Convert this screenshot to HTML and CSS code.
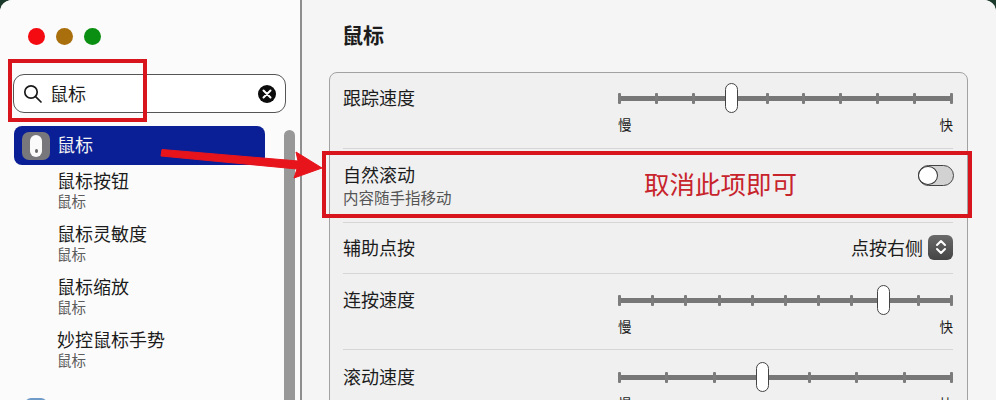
FILE: index.html
```html
<!DOCTYPE html>
<html lang="zh-CN">
  <head>
    <meta charset="UTF-8" />
    <title>鼠标</title>
    <link rel="stylesheet" href="styles.css">
  </head>
  <body>
    <div class="window">
      <div class="sidebar">
        <div class="traffic">
          <span class="light red"></span>
          <span class="light amber"></span>
          <span class="light green"></span>
        </div>

        <div class="search">
          <svg class="search-icon" width="20" height="20" viewBox="0 0 20 20" fill="none" stroke="#1a1a1a" stroke-width="1.7" stroke-linecap="round">
            <circle cx="8" cy="8" r="6.2" />
            <path d="M12.6 12.6 L18 18" />
          </svg>
          <span class="search-text">鼠标</span>
          <span class="search-clear">
            <svg width="10" height="10" viewBox="0 0 10 10" stroke="#fff" stroke-width="2" stroke-linecap="round">
              <path d="M1.5 1.5 L8.5 8.5 M8.5 1.5 L1.5 8.5" />
            </svg>
          </span>
        </div>

        <div class="nav">
          <div class="nav-active">
            <span class="nav-icon"><span class="mouse"><span class="mouse-dot"></span></span></span>
            <span class="nav-active-text">鼠标</span>
          </div>
          <div class="nav-item">
            <div class="nav-title">鼠标按钮</div>
            <div class="nav-sub">鼠标</div>
          </div>
          <div class="nav-item">
            <div class="nav-title">鼠标灵敏度</div>
            <div class="nav-sub">鼠标</div>
          </div>
          <div class="nav-item">
            <div class="nav-title">鼠标缩放</div>
            <div class="nav-sub">鼠标</div>
          </div>
          <div class="nav-item">
            <div class="nav-title">妙控鼠标手势</div>
            <div class="nav-sub">鼠标</div>
          </div>
        </div>

        <div class="scrollbar"></div>
        <div class="next-icon"></div>
      </div>

      <div class="main">
        <h1 class="page-title">鼠标</h1>

        <div class="panel">
          <div class="row row-tracking">
            <div class="row-label">跟踪速度</div>
            <div class="slider-box">
              <div class="slider">
                <div class="track">
                  <i></i><i></i><i></i><i></i><i></i><i></i><i></i><i></i><i></i><i></i>
                </div>
                <div class="thumb" style="left: 107px"></div>
              </div>
              <div class="ends"><span>慢</span><span>快</span></div>
            </div>
          </div>

          <div class="row row-toggle">
            <div>
              <div class="row-label">自然滚动</div>
              <div class="row-sub">内容随手指移动</div>
            </div>
            <div class="toggle"><span class="knob"></span></div>
          </div>

          <div class="row row-select">
            <div class="row-label">辅助点按</div>
            <div class="select">
              <span>点按右侧</span>
              <span class="select-btn">
                <svg width="12" height="18" viewBox="0 0 12 18" fill="none" stroke="#fff" stroke-width="2" stroke-linecap="round" stroke-linejoin="round">
                  <path d="M2 7 L6 3 L10 7 M2 11 L6 15 L10 11" />
                </svg>
              </span>
            </div>
          </div>

          <div class="row row-double">
            <div class="row-label">连按速度</div>
            <div class="slider-box">
              <div class="slider">
                <div class="track">
                  <i></i><i></i><i></i><i></i><i></i><i></i><i></i><i></i><i></i><i></i><i></i>
                </div>
                <div class="thumb" style="left: 259px"></div>
              </div>
              <div class="ends"><span>慢</span><span>快</span></div>
            </div>
          </div>

          <div class="row row-scroll">
            <div class="row-label">滚动速度</div>
            <div class="slider-box">
              <div class="slider">
                <div class="track">
                  <i></i><i></i><i></i><i></i><i></i><i></i><i></i><i></i>
                </div>
                <div class="thumb" style="left: 138px"></div>
              </div>
              <div class="ends"><span>慢</span><span>快</span></div>
            </div>
          </div>
        </div>
      </div>
    </div>

    <!-- red annotations drawn over the screenshot -->
    <div class="mark mark-search"></div>
    <div class="mark mark-row"></div>
    <div class="mark-text">取消此项即可</div>
    <svg class="arrow" width="996" height="400" viewBox="0 0 996 400">
      <path d="M162 149.5 L298 161 L296 152 L322 168 L294 178 L297 169 L161 156 Z" fill="#e8141c" stroke="#e8141c" stroke-linejoin="round" />
    </svg>
  </body>
</html>
```

FILE: styles.css
```css
* {
  box-sizing: border-box;
}

html,
body {
  margin: 0;
  height: 400px;
  overflow: hidden;
}

body {
  position: relative;
  background: #1c3b2c;
  font-family: "Noto Sans CJK SC", "Noto Sans", sans-serif;
  color: #1c1c1c;
}

.window {
  display: flex;
  height: 400px;
  border-radius: 12px 12px 0 0;
  overflow: hidden;
  background: #f5f5f5;
}

/* sidebar */

.sidebar {
  position: relative;
  width: 302px;
  flex-shrink: 0;
  padding: 0 0 0 13px;
  background: #fbfbfb;
  border-right: 2px solid #8e8e8e;
}

.traffic {
  display: flex;
  gap: 11px;
  padding: 28px 0 0 15px;
  height: 74px;
}

.light {
  width: 17px;
  height: 17px;
  border-radius: 50%;
}

.red {
  background: #f40b12;
}

.amber {
  background: #a86f0c;
}

.green {
  background: #0a8f12;
}

.search {
  display: flex;
  align-items: center;
  width: 273px;
  height: 39px;
  padding: 0 9px 0 9px;
  background: #fff;
  border: 1px solid #555;
  border-radius: 11px;
}

.search-icon {
  flex-shrink: 0;
}

.search-text {
  flex: 1;
  margin-left: 7px;
  padding-bottom: 2px;
  font-size: 18px;
}

.search-clear {
  display: flex;
  align-items: center;
  justify-content: center;
  width: 18px;
  height: 18px;
  border-radius: 50%;
  background: #0c0c0c;
}

.nav {
  padding-top: 13px;
}

.nav-active {
  display: flex;
  align-items: center;
  gap: 7px;
  width: 251px;
  height: 39px;
  padding-left: 8px;
  margin-left: 1px;
  margin-bottom: 3px;
  background: #0a1f96;
  border-radius: 8px;
  color: #f2f2f2;
  font-size: 18px;
}

.nav-active-text {
  padding-bottom: 4px;
}

.nav-icon {
  display: flex;
  align-items: center;
  justify-content: center;
  width: 28px;
  height: 28px;
  border-radius: 7px;
  background: #77777c;
}

.mouse {
  display: flex;
  align-items: flex-end;
  justify-content: center;
  width: 12px;
  height: 22px;
  padding-bottom: 4px;
  border-radius: 6px;
  background: #fafafa;
}

.mouse-dot {
  width: 3px;
  height: 4px;
  border-radius: 50%;
  background: #666;
}

.nav-item {
  height: 53px;
  padding-left: 44px;
}

.nav-title {
  height: 24px;
  line-height: 24px;
  font-size: 18px;
}

.nav-sub {
  height: 18px;
  line-height: 18px;
  font-size: 14.5px;
  color: #5c5c5c;
}

.scrollbar {
  position: absolute;
  top: 130px;
  left: 284px;
  width: 11px;
  height: 280px;
  border-radius: 6px;
  background: #989898;
}

.next-icon {
  position: absolute;
  top: 398px;
  left: 25px;
  width: 22px;
  height: 22px;
  border-radius: 6px;
  background: #6f9bc8;
}

/* main pane */

.main {
  flex: 1;
  padding: 0 28px 0 27px;
  background: #f5f5f5;
}

.page-title {
  margin: 0;
  height: 72px;
  padding: 19px 0 0 13px;
  line-height: 30px;
  font-size: 21px;
  font-weight: 700;
}

.panel {
  height: 360px;
  padding: 0 14px 0 13px;
  background: #f0f0f0;
  border: 1px solid #a2a2a2;
  border-radius: 8px;
}

.row {
  display: flex;
  justify-content: space-between;
  align-items: flex-start;
  border-bottom: 1px solid #d6d6d6;
}

.row-tracking {
  height: 76px;
  padding-top: 13px;
}

.row-toggle {
  height: 74px;
  padding-top: 14px;
}

.row-select {
  height: 51px;
  padding-bottom: 2px;
  align-items: center;
}

.row-double {
  height: 76px;
  padding-top: 14px;
}

.row-scroll {
  height: 77px;
  padding-top: 15px;
  border-bottom: none;
}

.row-label {
  line-height: 22px;
  font-size: 18px;
}

.row-sub {
  margin-top: 2px;
  line-height: 20px;
  font-size: 15.5px;
  color: #555;
}

.slider-box {
  width: 335px;
  margin-top: -3px;
}

.slider {
  position: relative;
  height: 30px;
  display: flex;
  align-items: center;
}

.track {
  display: flex;
  justify-content: space-between;
  align-items: center;
  width: 100%;
  height: 5px;
  background: #777;
}

.track i {
  width: 3px;
  height: 11px;
  border-radius: 1px;
  background: #7c7c7c;
}

.thumb {
  position: absolute;
  top: 0;
  width: 13px;
  height: 30px;
  background: #fff;
  border: 1.5px solid #444;
  border-radius: 7px;
}

.ends {
  display: flex;
  justify-content: space-between;
  margin-top: 1px;
  line-height: 20px;
  font-size: 13.5px;
}

.toggle {
  width: 36px;
  height: 21px;
  margin-top: 2px;
  margin-right: -1px;
  background: #d2d2d2;
  border: 1.3px solid #444;
  border-radius: 11px;
}

.knob {
  display: block;
  width: 20px;
  height: 19px;
  margin-left: -1px;
  background: #fff;
  border: 1.3px solid #333;
  border-radius: 50%;
}

.select {
  display: flex;
  align-items: center;
  gap: 5px;
  font-size: 18px;
}

.select-btn {
  display: flex;
  align-items: center;
  justify-content: center;
  width: 25px;
  height: 25px;
  border-radius: 6px;
  background: linear-gradient(#6a6a6a, #444);
}

/* annotations */

.mark {
  position: absolute;
  border: 4px solid #d8141c;
}

.mark-search {
  top: 59px;
  left: 8px;
  width: 139px;
  height: 63px;
}

.mark-row {
  top: 151px;
  left: 322px;
  width: 650px;
  height: 67px;
}

.mark-text {
  position: absolute;
  top: 165px;
  left: 644px;
  line-height: 36px;
  font-size: 25.5px;
  color: #c8242c;
}

.arrow {
  position: absolute;
  top: 0;
  left: 0;
}
```
